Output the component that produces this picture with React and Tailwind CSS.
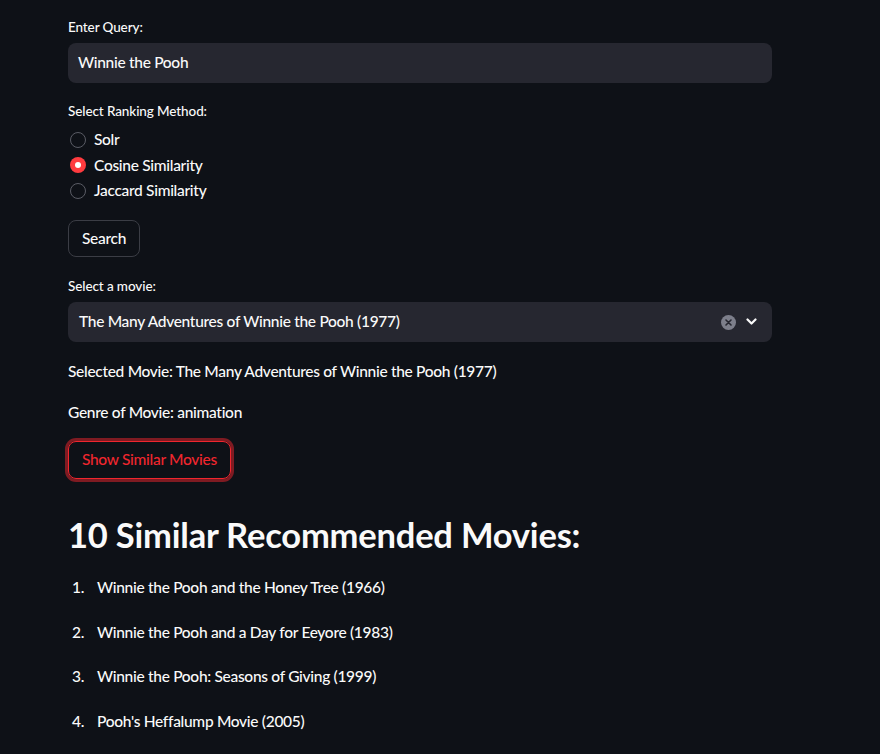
import React, { useState } from 'react';

const movies = [
    'Winnie the Pooh and the Honey Tree (1966)',
    'Winnie the Pooh and a Day for Eeyore (1983)',
    'Winnie the Pooh: Seasons of Giving (1999)',
    "Pooh's Heffalump Movie (2005)",
];

const methods = ['Solr', 'Cosine Similarity', 'Jaccard Similarity'];

const Label = ({ children }) => (
    <div className="text-[13.5px] leading-[20px] tracking-[-0.1px] text-[#fafafa] mb-[6px]">{children}</div>
);

const App = () => {
    const [method, setMethod] = useState('Cosine Similarity');

    return (
        <div
            className="min-h-screen bg-[#0e1117] text-[#fafafa] text-[15.5px] font-medium tracking-[-0.3px]"
            style={{ fontFamily: 'Lato, "Noto Sans", sans-serif' }}
        >
            <div className="w-[704px] ml-[68px] pt-[17px] pb-10">
                <Label>Enter Query:</Label>
                <div className="h-[40px] rounded-[8px] bg-[#262730] flex items-center px-[10px]">
                    Winnie the Pooh
                </div>

                <div className="mt-[18px]">
                    <Label>Select Ranking Method:</Label>
                    <div className="flex flex-col">
                        {methods.map((m) => (
                            <button
                                key={m}
                                type="button"
                                onClick={() => setMethod(m)}
                                className="flex items-center h-[25.5px] text-left"
                            >
                                {method === m ? (
                                    <span className="w-[16px] h-[16px] ml-[2px] rounded-full bg-[#ff3b3f] flex items-center justify-center">
                                        <span className="w-[6px] h-[6px] rounded-full bg-white" />
                                    </span>
                                ) : (
                                    <span className="w-[16px] h-[16px] ml-[2px] rounded-full border border-[#5a5c65]" />
                                )}
                                <span className="ml-[8px]">{m}</span>
                            </button>
                        ))}
                    </div>
                </div>

                <button
                    type="button"
                    className="mt-[16.5px] h-[37px] px-[13px] rounded-[8px] border border-[#3b3d45] text-[#fafafa]"
                >
                    Search
                </button>

                <div className="mt-[19px]">
                    <Label>Select a movie:</Label>
                    <div className="h-[40px] rounded-[8px] bg-[#262730] flex items-center pl-[11px] pr-[15px]">
                        <span className="flex-1">The Many Adventures of Winnie the Pooh (1977)</span>
                        <span className="w-[15px] h-[15px] rounded-full bg-[#7d7f8b] flex items-center justify-center mr-[10px]">
                            <svg width="7" height="7" viewBox="0 0 7 7">
                                <path d="M1 1L6 6M6 1L1 6" stroke="#262730" strokeWidth="1.6" strokeLinecap="round" />
                            </svg>
                        </span>
                        <svg width="11" height="8" viewBox="0 0 11 8">
                            <path d="M1.5 1.5L5.5 5.5L9.5 1.5" fill="none" stroke="#fafafa" strokeWidth="2.2" strokeLinecap="round" strokeLinejoin="round" />
                        </svg>
                    </div>
                </div>

                <p className="mt-[17px] leading-[24px]">
                    Selected Movie: The Many Adventures of Winnie the Pooh (1977)
                </p>
                <p className="mt-[17px] leading-[24px]">Genre of Movie: animation</p>

                <button
                    type="button"
                    className="mt-[17px] h-[38px] px-[13px] rounded-[8px] border border-[#f0262e] text-[#f0262e] shadow-[0_0_0_3px_rgba(240,38,46,0.5)]"
                >
                    Show Similar Movies
                </button>

                <h2 className="mt-[34px] text-[34.5px] leading-[44px] font-bold tracking-[-0.2px]">
                    10 Similar Recommended Movies:
                </h2>

                <ol className="mt-[18px] flex flex-col gap-[20.5px]">
                    {movies.map((title, i) => (
                        <li key={title} className="flex leading-[24px]">
                            <span className="w-[29px] pl-[4px]">{i + 1}.</span>
                            <span>{title}</span>
                        </li>
                    ))}
                </ol>
            </div>
        </div>
    );
};

export default App;
